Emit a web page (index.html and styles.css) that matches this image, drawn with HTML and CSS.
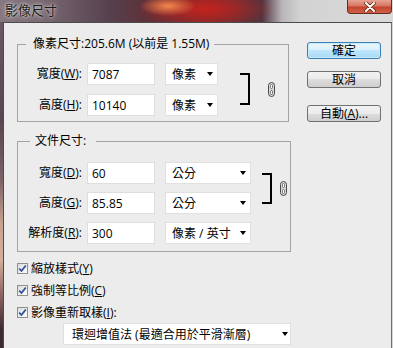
FILE: index.html
```html
<!DOCTYPE html>
<html lang="zh-Hant">
<head>
    <meta charset="UTF-8">
    <meta name="viewport" content="width=device-width, initial-scale=1.0">
    <title>影像尺寸</title>
    <link rel="stylesheet" href="styles.css">
</head>
<body>

<div class="dialog">
    <header class="titlebar">
        <span class="title">影像尺寸</span>
        <button class="close-btn" aria-label="關閉">
            <svg width="14" height="10" viewBox="0 0 14 10">
                <path d="M3 1 L11 9 M11 1 L3 9" stroke="#5a1a10" stroke-width="3.4" stroke-linecap="round"/>
                <path d="M3 1 L11 9 M11 1 L3 9" stroke="#fff" stroke-width="2" stroke-linecap="round"/>
            </svg>
        </button>
    </header>

    <div class="client">
        <div class="main">
            <fieldset class="group group-pixel">
                <legend>像素尺寸:205.6M (以前是 1.55M)</legend>
                <div class="form-grid">
                    <label class="field-label" for="pxWidth">寬度(<u>W</u>):</label>
                    <input class="num-input" id="pxWidth" type="text" value="7087">
                    <div class="unit-select short">像素<span class="select-arrow"></span></div>
                    <div class="link-bracket"></div>
                    <svg class="chain" width="7" height="15" viewBox="0 0 7 15">
                        <rect x="0.5" y="0.5" width="6" height="14" rx="3" fill="#d8d8d8" stroke="#4a4a4a"/>
                        <rect x="2.5" y="2.5" width="2" height="4" rx="1" fill="#fff" stroke="#5a5a5a" stroke-width="0.8"/>
                        <rect x="2.5" y="8.5" width="2" height="4" rx="1" fill="#fff" stroke="#5a5a5a" stroke-width="0.8"/>
                    </svg>

                    <label class="field-label" for="pxHeight">高度(<u>H</u>):</label>
                    <input class="num-input" id="pxHeight" type="text" value="10140">
                    <div class="unit-select short">像素<span class="select-arrow"></span></div>
                </div>
            </fieldset>

            <fieldset class="group group-doc">
                <legend>文件尺寸:</legend>
                <div class="form-grid">
                    <label class="field-label" for="docWidth">寬度(<u>D</u>):</label>
                    <input class="num-input" id="docWidth" type="text" value="60">
                    <div class="unit-select wide">公分<span class="select-arrow"></span></div>
                    <div class="link-bracket"></div>
                    <svg class="chain" width="7" height="15" viewBox="0 0 7 15">
                        <rect x="0.5" y="0.5" width="6" height="14" rx="3" fill="#d8d8d8" stroke="#4a4a4a"/>
                        <rect x="2.5" y="2.5" width="2" height="4" rx="1" fill="#fff" stroke="#5a5a5a" stroke-width="0.8"/>
                        <rect x="2.5" y="8.5" width="2" height="4" rx="1" fill="#fff" stroke="#5a5a5a" stroke-width="0.8"/>
                    </svg>

                    <label class="field-label" for="docHeight">高度(<u>G</u>):</label>
                    <input class="num-input" id="docHeight" type="text" value="85.85">
                    <div class="unit-select wide">公分<span class="select-arrow"></span></div>

                    <label class="field-label" for="docRes">解析度(<u>R</u>):</label>
                    <input class="num-input" id="docRes" type="text" value="300">
                    <div class="unit-select wide">像素 / 英寸<span class="select-arrow"></span></div>
                </div>
            </fieldset>

            <div class="options">
                <div class="option"><span class="checkbox"><svg width="9" height="9" viewBox="0 0 9 9"><path d="M1.2 4.6 L3.5 7 L7.8 1.5" fill="none" stroke="#2f4f9a" stroke-width="1.8"/></svg></span>縮放樣式(<u>Y</u>)</div>
                <div class="option"><span class="checkbox"><svg width="9" height="9" viewBox="0 0 9 9"><path d="M1.2 4.6 L3.5 7 L7.8 1.5" fill="none" stroke="#2f4f9a" stroke-width="1.8"/></svg></span>強制等比例(<u>C</u>)</div>
                <div class="option"><span class="checkbox"><svg width="9" height="9" viewBox="0 0 9 9"><path d="M1.2 4.6 L3.5 7 L7.8 1.5" fill="none" stroke="#2f4f9a" stroke-width="1.8"/></svg></span>影像重新取樣(<u>I</u>):</div>
            </div>

            <div class="unit-select resample">環迴增值法 (最適合用於平滑漸層)<span class="select-arrow"></span></div>
        </div>

        <div class="actions">
            <button class="btn btn-default">確定</button>
            <button class="btn">取消</button>
            <button class="btn btn-auto">自動(<u>A</u>)...</button>
        </div>
    </div>
</div>

</body>
</html>
```

FILE: styles.css
```css
body {
    margin: 0;
    font-family: "Open Sans", "Noto Sans CJK TC", sans-serif;
    font-size: 12px;
    color: #000;
    background: #ddd;
}
.dialog {
    width: 393px;
    height: 348px;
    overflow: hidden;
    display: flex;
    flex-direction: column;
    background: linear-gradient(180deg, #6f5c67 0, #5a4552 120px, #7c6266 180px, #c8a490 225px, #d2b09c 260px, #8a6462 295px, #3e2a32 330px);
}

/* title bar */
.titlebar {
    flex: none;
    height: 22px;
    display: flex;
    justify-content: space-between;
    align-items: flex-start;
    background:
        radial-gradient(ellipse 28px 10px at 168px 6px, rgba(250, 140, 80, 0.95), rgba(250, 140, 80, 0) 100%),
        radial-gradient(ellipse 70px 20px at 205px 9px, rgba(195, 35, 30, 1), rgba(195, 35, 30, 0) 100%),
        linear-gradient(90deg, #857880 0, #7a6a73 40px, #56404e 110px, #5e3038 150px, #7a2a2c 210px, #4e3440 262px, #b9b4b7 282px, #d3d3d3 300px, #dadada 100%);
}
.title {
    padding: 3px 0 0 5px;
    font-size: 13px;
    line-height: 14px;
    color: #1c1c1c;
    text-shadow: 0 0 5px rgba(255, 255, 255, 0.8), 0 0 2px rgba(255, 255, 255, 0.6);
}
.close-btn {
    width: 45px;
    height: 14px;
    margin-right: 1px;
    padding: 0;
    border: 1px solid #6a2a22;
    border-top: none;
    border-radius: 0 0 4px 4px;
    background: linear-gradient(#e7a494, #d57562 45%, #c2452f 55%, #cf6247);
    display: flex;
    align-items: center;
    justify-content: center;
}

/* client area */
.client {
    flex: 1;
    display: flex;
    margin: 0 1px 0 3px;
    background: #ececec;
    border-top: 1px solid #4c4c4c;
    border-left: 1px solid #4c4c4c;
    border-right: 1px solid #6e6e6e;
    box-shadow: 1px 0 0 #d6d6d6;
}
.main {
    flex: none;
    width: 274px;
    padding-left: 13px;
}
.group {
    box-sizing: border-box;
    margin: 14px 0 0;
    padding: 12px 0 5px;
    border: 1px solid #a3a3a3;
    min-width: 0;
}
.group legend {
    margin-left: 8px;
    padding: 0 5px 0 7px;
    line-height: 14px;
}
.group-pixel {
    width: 272px;
}
.group-doc {
    width: 274px;
    margin-top: 12px;
    padding: 14px 0 7px;
}
.group-doc legend {
    margin-left: 12px;
    padding: 0 10px 0 5px;
}

.form-grid {
    display: grid;
    grid-template-columns: 69px 68px auto auto auto;
    grid-auto-rows: 22px;
    row-gap: 9px;
}
.group-doc .form-grid {
    row-gap: 8px;
}
.field-label {
    text-align: right;
    padding-right: 5px;
    line-height: 22px;
    white-space: nowrap;
}
.num-input {
    box-sizing: border-box;
    width: 68px;
    height: 22px;
    margin: 0;
    padding: 0 0 0 4px;
    border: 1px solid #dedede;
    background: #fff;
    font: inherit;
    color: #000;
}
.unit-select {
    box-sizing: border-box;
    height: 22px;
    margin-left: 10px;
    padding: 0 4px 0 6px;
    border: 1px solid #e0e0e0;
    background: #fff;
    display: flex;
    align-items: center;
    justify-content: space-between;
    white-space: nowrap;
}
.unit-select.short {
    width: 53px;
}
.unit-select.wide {
    width: 86px;
}
.select-arrow {
    width: 0;
    height: 0;
    border-left: 3.5px solid transparent;
    border-right: 3.5px solid transparent;
    border-top: 4px solid #000;
}
.link-bracket {
    grid-column: 4;
    grid-row: 1 / span 2;
    width: 8px;
    margin: 10px 0 11px 9px;
    border: 2px solid #000;
    border-left: none;
}
.group-doc .link-bracket {
    margin: 11px 0 10px 8px;
}
.chain {
    grid-column: 5;
    grid-row: 1 / span 2;
    align-self: center;
    margin-left: 5px;
}

/* checkboxes */
.options {
    margin-top: 5px;
}
.option {
    height: 22px;
    display: flex;
    align-items: center;
}
.checkbox {
    box-sizing: border-box;
    width: 11px;
    height: 11px;
    margin-right: 3px;
    border: 1px solid #8e8f8f;
    background: linear-gradient(135deg, #dcdcdc, #fdfdfd);
    display: flex;
    align-items: center;
    justify-content: center;
}
.resample {
    width: 228px;
    margin-left: 46px;
    padding: 0 2px 0 8px;
}

/* buttons */
.actions {
    margin-left: 16px;
    padding-top: 19px;
    display: flex;
    flex-direction: column;
}
.btn {
    box-sizing: border-box;
    width: 74px;
    height: 17px;
    padding: 0;
    border: 1px solid #707070;
    border-radius: 3px;
    background: linear-gradient(#f2f2f2 0, #ebebeb 50%, #dddddd 50%, #cfcfcf 100%);
    font: inherit;
    line-height: 15px;
    color: #000;
}
.btn + .btn {
    margin-top: 12px;
}
.btn-default {
    border-color: #3c7fb1;
    background: linear-gradient(#eaf6fd 0, #d9f0fc 50%, #bee6fd 50%, #a7d9f5 100%);
    box-shadow: inset 0 0 0 1px #c6ebfd;
}
.btn + .btn-auto {
    margin-top: 17px;
}
```
